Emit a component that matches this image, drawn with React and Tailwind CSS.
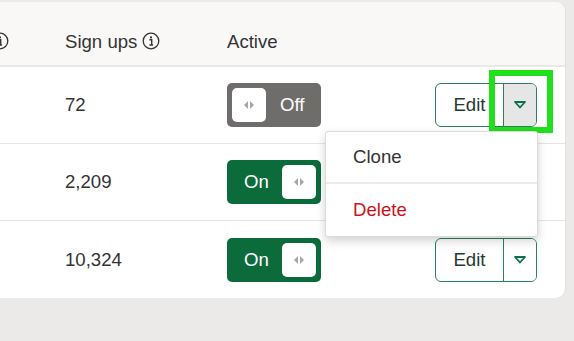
import React from "react";

function Info() {
  return (
    <svg width="18" height="18" viewBox="0 0 18 18" className="shrink-0">
      <circle cx="9" cy="9" r="7.8" fill="none" stroke="#333" strokeWidth="1.3" />
      <circle cx="9" cy="5.4" r="1.1" fill="#333" />
      <path d="M7.4 7.8h2.3v5.2M7.4 13h3.6" fill="none" stroke="#333" strokeWidth="1.4" />
    </svg>
  );
}

function Grip() {
  return (
    <svg width="12" height="10" viewBox="0 0 12 10">
      <path d="M5 1 L1 5 L5 9 Z" fill="#a9a7a5" />
      <path d="M7 1 L11 5 L7 9 Z" fill="#a9a7a5" />
    </svg>
  );
}

function Toggle({ on }) {
  if (on) {
    return (
      <div className="flex h-[44px] w-[94px] items-center justify-between rounded-[5px] bg-[#0b6b3a] pl-[17px] pr-[5px]">
        <span className="text-white">On</span>
        <div className="flex h-[34px] w-[34px] items-center justify-center rounded-[5px] bg-white">
          <Grip />
        </div>
      </div>
    );
  }
  return (
    <div className="flex h-[44px] w-[94px] items-center rounded-[5px] bg-[#6f6d6b] pl-[5px]">
      <div className="flex h-[34px] w-[34px] items-center justify-center rounded-[5px] bg-white">
        <Grip />
      </div>
      <span className="ml-[14px] text-white">Off</span>
    </div>
  );
}

function Caret() {
  return (
    <svg width="14" height="10" viewBox="0 0 14 10">
      <path d="M2 2 H12 L7 7.5 Z" fill="none" stroke="#0f6e4c" strokeWidth="1.8" strokeLinejoin="round" />
    </svg>
  );
}

function EditButton({ active }) {
  return (
    <div className="flex h-[44px] w-[102px] overflow-hidden rounded-[6px] border border-[#2a8259]">
      <div className="flex w-[67px] items-center justify-center text-[#253a30]">Edit</div>
      <div className={`flex flex-1 items-center justify-center border-l border-[#2a8259] ${active ? "bg-[#e6e6e6]" : "bg-white"}`}>
        <Caret />
      </div>
    </div>
  );
}

function Row({ value, on, active, last }) {
  return (
    <div className={`flex h-[77px] items-center ${last ? "" : "border-b border-[#e6e4e2]"}`}>
      <div className="w-[185px] shrink-0" />
      <div className="w-[162px] shrink-0">{value}</div>
      <div className="shrink-0">
        <Toggle on={on} />
      </div>
      <div className="flex flex-1 justify-end pr-[28px]">
        <EditButton active={active} />
      </div>
    </div>
  );
}

export default function App() {
  return (
    <div
      className="relative h-[341px] w-[574px] overflow-hidden bg-[#ebeae8] pt-[2px] text-[18.6px] text-[#333]"
      style={{ fontFamily: '"Liberation Sans", Arial, sans-serif' }}
    >
      <div className="ml-[-120px] w-[686px] overflow-hidden rounded-[10px] border-r border-[#e2e0de] bg-white">
        <div className="flex h-[65px] items-center border-b-2 border-[#ebe9e7] bg-[#f9f8f7] pt-[16px]">
          <div className="flex w-[185px] shrink-0 items-center justify-end gap-[5px] pr-[56px]">
            <span>Views</span>
            <Info />
          </div>
          <div className="flex w-[162px] shrink-0 items-center gap-[5px]">
            <span>Sign ups</span>
            <Info />
          </div>
          <div>Active</div>
        </div>
        <Row value="72" on={false} active />
        <Row value="2,209" on />
        <Row value="10,324" on last />
      </div>

      <div className="absolute left-[489px] top-[70px] h-[63px] w-[64px] border-[6px] border-[#1fe01a]" />

      <div className="absolute left-[325px] top-[131px] w-[213px] rounded-[3px] border border-[#dddbd9] bg-white shadow-[0_4px_10px_rgba(0,0,0,0.18)]">
        <div className="flex h-[52px] items-center border-b-2 border-[#ecebea] pl-[27px]">Clone</div>
        <div className="flex h-[52px] items-center pl-[27px] text-[#d0101b]">Delete</div>
      </div>
    </div>
  );
}
